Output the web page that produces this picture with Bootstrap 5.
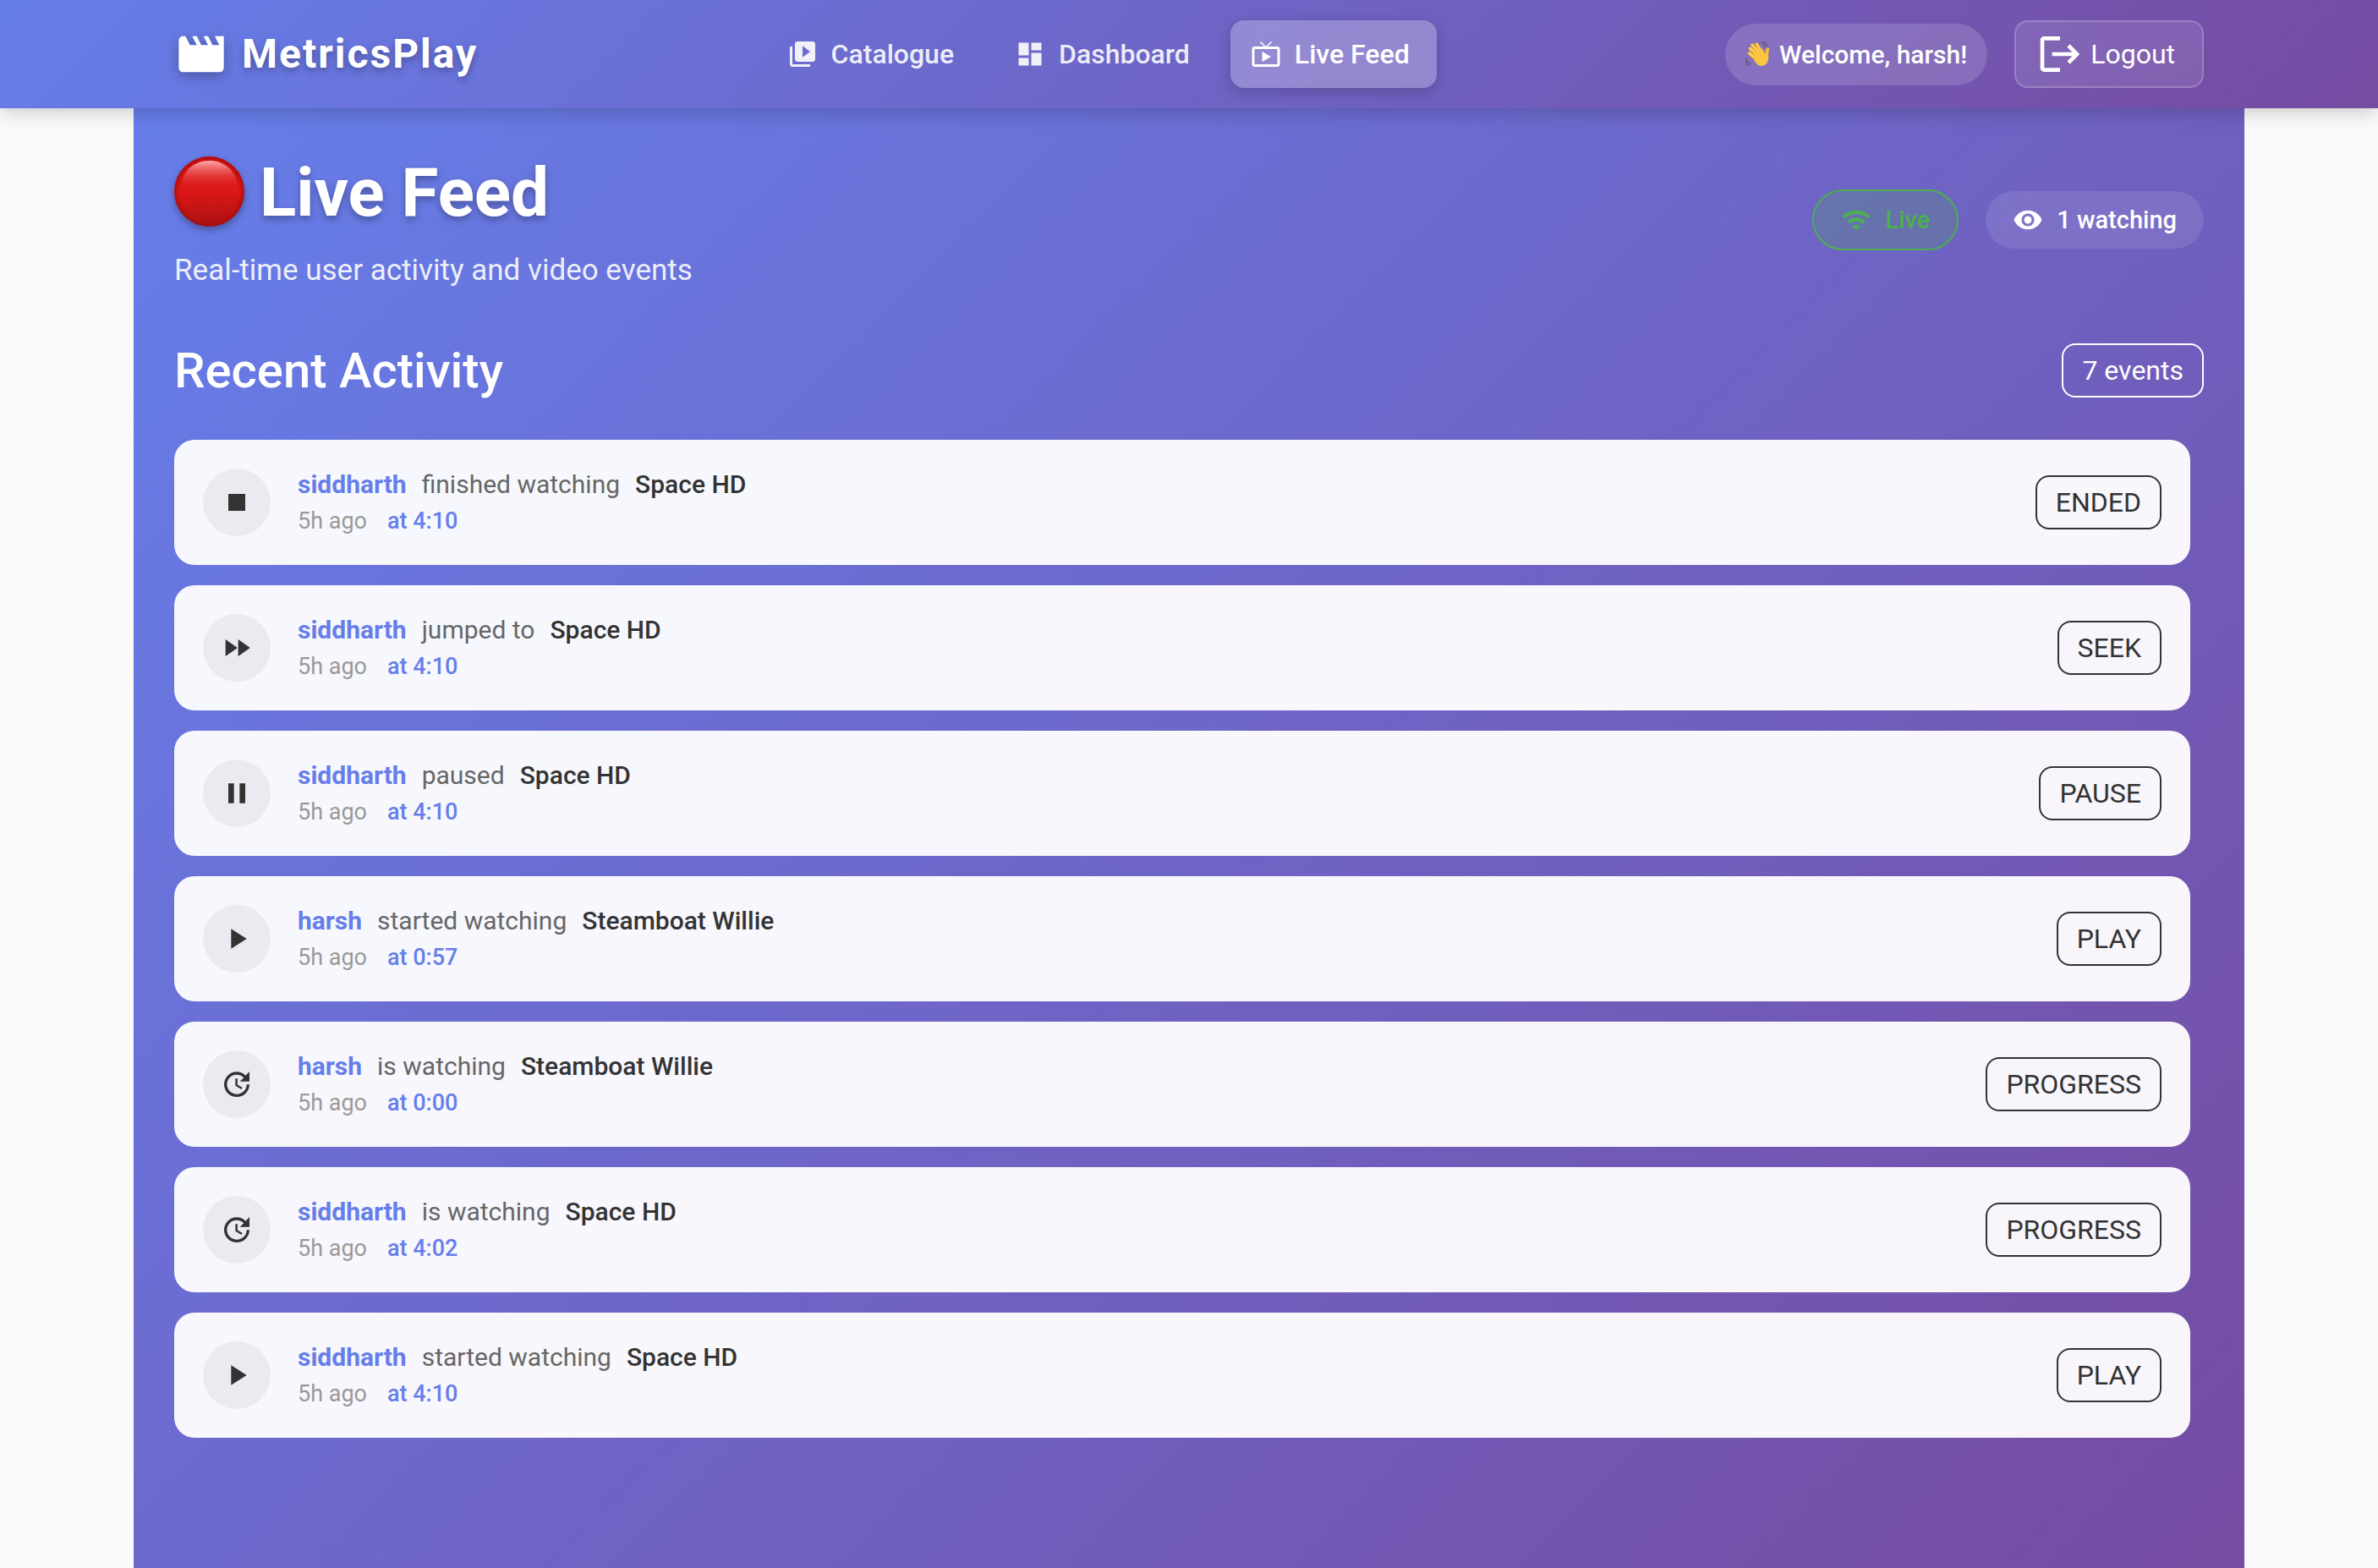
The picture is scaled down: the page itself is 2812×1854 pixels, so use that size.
<!DOCTYPE html>
<html lang="en">
<head>
<meta charset="utf-8">
<meta name="viewport" content="width=device-width, initial-scale=1">
<title>MetricsPlay - Live Feed</title>
<link href="https://cdn.jsdelivr.net/npm/bootstrap@5.3.0/dist/css/bootstrap.min.css" rel="stylesheet">
<style>
  :root { --grad: linear-gradient(135deg, #667eea 0%, #764ba2 100%); --ink: #333; --accent: #667eea; }
  body { font-family: Roboto, "Liberation Sans", sans-serif; background: #fafafa; font-size: 32px; line-height: 1.5; min-height: 100vh; }
  svg { display: block; flex: none; fill: currentColor; }
  .topbar { background: var(--grad); box-shadow: 0 8px 20px -2px rgba(0,0,0,.18); z-index: 2; }
  .wrap { width: 100%; max-width: 2496px; padding-left: 48px; padding-right: 48px; }
  .bar-inner { height: 128px; }
  .brand-link { gap: 16px; font-size: 48px; font-weight: 700; letter-spacing: 2px; text-shadow: 0 4px 8px rgba(0,0,0,.3); }
  .brand-link svg { filter: drop-shadow(0 4px 8px rgba(0,0,0,.3)); }
  .menu-row { gap: 16px; }
  .menu-row .nav-link { height: 80px; gap: 16px; padding: 0 32px 0 24px; border-radius: 16px; font-weight: 500; color: rgba(255,255,255,.9); }
  .menu-row .nav-link.active { color: #fff; background: rgba(255,255,255,.25); box-shadow: 0 4px 16px rgba(0,0,0,.2); }
  .hello { height: 73px; padding: 0 24px; gap: 10px; font-size: 30px; font-weight: 500; background: rgba(255,255,255,.15); border-radius: 40px; }
  .logout-btn { height: 80px; padding: 0 32px 0 24px; gap: 8px; font-size: 32px; line-height: 1; color: #fff; background: rgba(255,255,255,.1); border: 2px solid rgba(255,255,255,.2); border-radius: 16px; }
  .feed { background: var(--grad); padding-top: 48px; padding-bottom: 48px; }
  .page-title { font-size: 80px; line-height: 104px; font-weight: 700; gap: 18px; text-shadow: 0 4px 8px rgba(0,0,0,.3); margin: 0 0 16px; }
  .page-title svg { margin-bottom: 4px; filter: drop-shadow(0 4px 4px rgba(0,0,0,.3)); }
  .subtitle { font-size: 35px; line-height: 48px; color: rgba(255,255,255,.9); }
  .pill { padding: 16px 32px; gap: 16px; font-size: 29px; line-height: 36px; font-weight: 500; border-radius: 40px; background: rgba(255,255,255,.1); }
  .pill-live { color: #4caf50; background: rgba(76,175,80,.2); border: 2px solid #4caf50; }
  .recent { margin-top: 60px; }
  .section-title { font-size: 58px; line-height: 68px; font-weight: 500; }
  .chip { height: 64px; padding: 0 22px; border: 2px solid currentColor; border-radius: 16px; line-height: 60px; }
  .events { gap: 24px; padding-right: 16px; margin-top: 48px; }
  .event { padding: 34px; gap: 32px; background: rgba(255,255,255,.95); border-radius: 24px; color: var(--ink); }
  .dot { width: 80px; height: 80px; border-radius: 50%; background: rgba(0,0,0,.05); }
  .what { gap: 18px; font-size: 30px; line-height: 36px; color: #666; margin-bottom: 8px; }
  .what strong, .when b { color: var(--accent); }
  .what em { font-style: normal; font-weight: 500; color: var(--ink); }
  .when { gap: 24px; font-size: 27px; line-height: 34px; color: #999; }
  .when b { font-weight: 500; }
</style>
</head>
<body class="d-flex flex-column">
<svg width="0" height="0" class="position-absolute" aria-hidden="true">
  <defs>
    <symbol id="stop" viewBox="0 0 24 24"><path d="M6 6h12v12H6z"/></symbol>
    <symbol id="seek" viewBox="0 0 24 24"><path d="M4 18l8.500-6L4 6v12zm9-12v12l8.500-6L13 6z"/></symbol>
    <symbol id="pause" viewBox="0 0 24 24"><path d="M6 19h4V5H6v14zm8-14v14h4V5h-4z"/></symbol>
    <symbol id="play" viewBox="0 0 24 24"><path d="M8 5v14l11-7z"/></symbol>
    <symbol id="update" viewBox="0 0 24 24"><path d="M21 10.120h-6.780l2.740-2.820c-2.730-2.700-7.150-2.800-9.880-.1-2.730 2.710-2.730 7.080 0 9.790s7.150 2.710 9.880 0C18.320 15.650 19 14.080 19 12.100h2c0 1.980-.88 4.550-2.640 6.290-3.510 3.480-9.210 3.480-12.720 0-3.500-3.470-3.530-9.110-.02-12.580s9.140-3.470 12.650 0L21 3v7.120zM12.500 8v4.250l3.500 2.080-.72 1.210L11 13V8h1.500z"/></symbol>
  </defs>
</svg>

<header class="topbar position-relative text-white">
  <div class="wrap bar-inner mx-auto d-flex align-items-center justify-content-between">
    <a href="#" class="brand-link d-flex align-items-center text-white text-decoration-none">
      <svg width="64" height="64" viewBox="0 0 24 24" aria-hidden="true"><path d="M18 4l2 4h-3l-2-4h-2l2 4h-3l-2-4H8l2 4H7L5 4H4c-1.100 0-1.990.9-1.990 2L2 18c0 1.100.9 2 2 2h16c1.100 0 2-.9 2-2V4h-4z"/></svg>
      MetricsPlay
    </a>
    <nav class="menu-row d-flex" aria-label="Main">
      <a href="#" class="nav-link d-flex align-items-center">
        <svg width="36" height="36" viewBox="0 0 24 24" aria-hidden="true"><path d="M4 6H2v14c0 1.100.9 2 2 2h14v-2H4V6zm16-4H8c-1.100 0-2 .9-2 2v12c0 1.100.9 2 2 2h12c1.100 0 2-.9 2-2V4c0-1.100-.9-2-2-2zm-8 12.500v-9l6 4.500-6 4.500z"/></svg>
        Catalogue
      </a>
      <a href="#" class="nav-link d-flex align-items-center">
        <svg width="36" height="36" viewBox="0 0 24 24" aria-hidden="true"><path d="M3 13h8V3H3v10zm0 8h8v-6H3v6zm10 0h8V11h-8v10zm0-18v6h8V3h-8z"/></svg>
        Dashboard
      </a>
      <a href="#" class="nav-link active d-flex align-items-center" aria-current="page">
        <svg width="36" height="36" viewBox="0 0 24 24" aria-hidden="true"><path d="M21 6h-7.590l3.290-3.290L16 2l-4 4-4-4-.71.71L10.590 6H3c-1.100 0-2 .89-2 2v12c0 1.100.9 2 2 2h18c1.100 0 2-.9 2-2V8c0-1.110-.9-2-2-2zm0 14H3V8h18v12zM9 10v8l7-4z"/></svg>
        Live Feed
      </a>
    </nav>
    <div class="d-flex align-items-center gap-4">
      <span class="hello d-flex align-items-center me-2">
        <svg width="30" height="30" viewBox="0 0 32 32" aria-hidden="true">
          <g fill="none" stroke-linecap="round">
            <g stroke="#f6b52b" stroke-width="4.200"><path d="M16 19L6 9"/><path d="M18 16L8.500 4.500"/><path d="M21 14L14 3.500"/><path d="M13 22L5 15"/></g>
            <g stroke="#ffd04e" stroke-width="2.800"><path d="M16 18.500L6.300 8.800"/><path d="M18 15.500L8.800 4.500"/><path d="M21 13.500L14.300 3.600"/><path d="M13 21.500L5.300 14.800"/></g>
            <path d="M27 20c-1-5 .5-7 1-10" stroke="#f8bd35" stroke-width="4.200"/>
            <path d="M20 1c3 1 4 3 4 6M23 0c3 2 4 4 4 6M1 21c0 4 3 6 6 7M0 24c1 4 3 6 5 6" stroke="#5c5570" stroke-width="1.300"/>
          </g>
          <path d="M10 19L21 9l4 7c2-1 4 0 4 4 0 6-3 10-8 11-6 0-10-5-11-12z" fill="#fcc63f"/>
        </svg>
        Welcome, harsh!
      </span>
      <button type="button" class="logout-btn d-flex align-items-center">
        <svg width="56" height="56" viewBox="0 0 24 24" aria-hidden="true"><path d="M17 7l-1.410 1.410L18.170 11H8v2h10.170l-2.580 2.580L17 17l5-5zM4 5h8V3H4c-1.100 0-2 .9-2 2v14c0 1.100.9 2 2 2h8v-2H4V5z"/></svg>
        Logout
      </button>
    </div>
  </div>
</header>

<main class="feed wrap mx-auto flex-grow-1 text-white">
  <div class="d-flex align-items-center justify-content-between">
    <div>
      <h1 class="page-title d-flex align-items-center">
        <svg width="83" height="83" viewBox="0 0 82 82" role="img" aria-label="Live">
          <defs>
            <linearGradient id="ball" x1="0" y1="0" x2="0" y2="1"><stop offset="0" stop-color="#d31010"/><stop offset=".5" stop-color="#dc1717"/><stop offset="1" stop-color="#ab1111"/></linearGradient>
            <linearGradient id="gloss" x1="0" y1="0" x2="0" y2="1"><stop offset="0" stop-color="#ffa9a9"/><stop offset="1" stop-color="#e01717" stop-opacity="0"/></linearGradient>
            <radialGradient id="rim"><stop offset=".84" stop-color="#a00c0c" stop-opacity="0"/><stop offset="1" stop-color="#a00c0c" stop-opacity=".7"/></radialGradient>
          </defs>
          <circle cx="41" cy="41" r="41" fill="url(#ball)"/>
          <circle cx="41" cy="41" r="41" fill="url(#rim)"/>
          <path d="M7 40C8 18 22 5 41 5s33 13 34 35z" fill="url(#gloss)"/>
        </svg>
        Live Feed
      </h1>
      <p class="subtitle mb-0">Real-time user activity and video events</p>
    </div>
    <div class="d-flex align-items-center gap-4">
      <span class="pill pill-live d-flex align-items-center me-2">
        <svg width="36" height="36" viewBox="0 0 24 24" aria-hidden="true"><path d="M1 9l2 2c4.970-4.970 13.030-4.970 18 0l2-2C16.930 2.930 7.080 2.930 1 9zm8 8l3 3 3-3c-1.650-1.660-4.340-1.660-6 0zm-4-4l2 2c2.760-2.760 7.240-2.760 10 0l2-2C15.140 9.140 8.870 9.140 5 13z"/></svg>
        Live
      </span>
      <span class="pill d-flex align-items-center">
        <svg width="36" height="36" viewBox="0 0 24 24" aria-hidden="true"><path d="M12 4.500C7 4.500 2.730 7.610 1 12c1.730 4.390 6 7.500 11 7.500s9.270-3.110 11-7.500c-1.730-4.390-6-7.500-11-7.500zM12 17c-2.760 0-5-2.240-5-5s2.240-5 5-5 5 2.240 5 5-2.240 5-5 5zm0-8c-1.660 0-3 1.340-3 3s1.340 3 3 3 3-1.340 3-3-1.340-3-3-3z"/></svg>
        1 watching
      </span>
    </div>
  </div>

  <section class="recent">
    <div class="d-flex align-items-center justify-content-between">
      <h2 class="section-title mb-0">Recent Activity</h2>
      <span class="chip">7 events</span>
    </div>
    <ul class="events list-unstyled d-flex flex-column mb-0">
      <li class="event d-flex align-items-center">
        <span class="dot d-flex align-items-center justify-content-center"><svg width="40" height="40"><use href="#stop"/></svg></span>
        <div class="flex-grow-1">
          <div class="what d-flex"><strong>siddharth</strong><span>finished watching</span><em>Space HD</em></div>
          <div class="when d-flex"><span>5h ago</span><b>at 4:10</b></div>
        </div>
        <span class="chip">ENDED</span>
      </li>
      <li class="event d-flex align-items-center">
        <span class="dot d-flex align-items-center justify-content-center"><svg width="40" height="40"><use href="#seek"/></svg></span>
        <div class="flex-grow-1">
          <div class="what d-flex"><strong>siddharth</strong><span>jumped to</span><em>Space HD</em></div>
          <div class="when d-flex"><span>5h ago</span><b>at 4:10</b></div>
        </div>
        <span class="chip">SEEK</span>
      </li>
      <li class="event d-flex align-items-center">
        <span class="dot d-flex align-items-center justify-content-center"><svg width="40" height="40"><use href="#pause"/></svg></span>
        <div class="flex-grow-1">
          <div class="what d-flex"><strong>siddharth</strong><span>paused</span><em>Space HD</em></div>
          <div class="when d-flex"><span>5h ago</span><b>at 4:10</b></div>
        </div>
        <span class="chip">PAUSE</span>
      </li>
      <li class="event d-flex align-items-center">
        <span class="dot d-flex align-items-center justify-content-center"><svg width="40" height="40"><use href="#play"/></svg></span>
        <div class="flex-grow-1">
          <div class="what d-flex"><strong>harsh</strong><span>started watching</span><em>Steamboat Willie</em></div>
          <div class="when d-flex"><span>5h ago</span><b>at 0:57</b></div>
        </div>
        <span class="chip">PLAY</span>
      </li>
      <li class="event d-flex align-items-center">
        <span class="dot d-flex align-items-center justify-content-center"><svg width="40" height="40"><use href="#update"/></svg></span>
        <div class="flex-grow-1">
          <div class="what d-flex"><strong>harsh</strong><span>is watching</span><em>Steamboat Willie</em></div>
          <div class="when d-flex"><span>5h ago</span><b>at 0:00</b></div>
        </div>
        <span class="chip">PROGRESS</span>
      </li>
      <li class="event d-flex align-items-center">
        <span class="dot d-flex align-items-center justify-content-center"><svg width="40" height="40"><use href="#update"/></svg></span>
        <div class="flex-grow-1">
          <div class="what d-flex"><strong>siddharth</strong><span>is watching</span><em>Space HD</em></div>
          <div class="when d-flex"><span>5h ago</span><b>at 4:02</b></div>
        </div>
        <span class="chip">PROGRESS</span>
      </li>
      <li class="event d-flex align-items-center">
        <span class="dot d-flex align-items-center justify-content-center"><svg width="40" height="40"><use href="#play"/></svg></span>
        <div class="flex-grow-1">
          <div class="what d-flex"><strong>siddharth</strong><span>started watching</span><em>Space HD</em></div>
          <div class="when d-flex"><span>5h ago</span><b>at 4:10</b></div>
        </div>
        <span class="chip">PLAY</span>
      </li>
    </ul>
  </section>
</main>
<script src="https://cdn.jsdelivr.net/npm/bootstrap@5.3.0/dist/js/bootstrap.bundle.min.js"></script>
</body>
</html>
